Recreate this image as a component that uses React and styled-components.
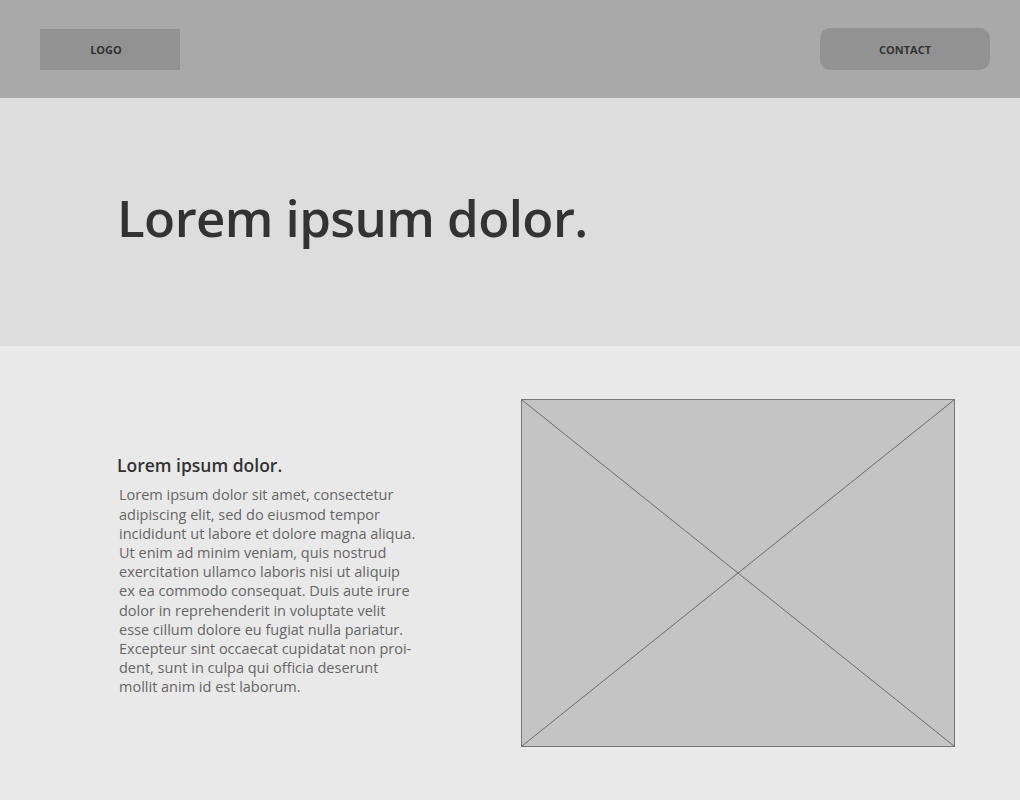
import React from "react";
import styled, { createGlobalStyle } from "styled-components";

const GlobalStyle = createGlobalStyle`
  * { box-sizing: border-box; }
  body {
    margin: 0;
    font-family: "Open Sans", "Liberation Sans", sans-serif;
    background: #e9e9e9;
  }
`;

const paragraphLines = [
  "Lorem ipsum dolor sit amet, consectetur",
  "adipiscing elit, sed do eiusmod tempor",
  "incididunt ut labore et dolore magna aliqua.",
  "Ut enim ad minim veniam, quis nostrud",
  "exercitation ullamco laboris nisi ut aliquip",
  "ex ea commodo consequat. Duis aute irure",
  "dolor in reprehenderit in voluptate velit",
  "esse cillum dolore eu fugiat nulla pariatur.",
  "Excepteur sint occaecat cupidatat non proi-",
  "dent, sunt in culpa qui officia deserunt",
  "mollit anim id est laborum.",
];

const App = () => {
  return (
    <>
      <GlobalStyle />
      <Header>
        <Logo>LOGO</Logo>
        <ContactButton type="button">CONTACT</ContactButton>
      </Header>

      <Hero>
        <HeroTitle>Lorem ipsum dolor.</HeroTitle>
      </Hero>

      <Content>
        <TextBlock>
          <SubTitle>Lorem ipsum dolor.</SubTitle>
          <Paragraph>
            {paragraphLines.map((line, index) => (
              <span key={index}>{line}</span>
            ))}
          </Paragraph>
        </TextBlock>

        {/* image placeholder */}
        <Placeholder>
          <svg viewBox="0 0 100 100" preserveAspectRatio="none">
            <line x1="0" y1="0" x2="100" y2="100" vectorEffect="non-scaling-stroke" />
            <line x1="100" y1="0" x2="0" y2="100" vectorEffect="non-scaling-stroke" />
          </svg>
        </Placeholder>
      </Content>
    </>
  );
};

const Header = styled.header`
  height: 98px;
  padding: 0 30px 0 40px;
  background: #a9a9a9;
  display: flex;
  align-items: center;
  justify-content: space-between;
`;

const Logo = styled.div`
  width: 140px;
  height: 41px;
  padding-right: 8px;
  background: #929292;
  color: #333;
  font-size: 11px;
  font-weight: 700;
  display: flex;
  align-items: center;
  justify-content: center;
`;

const ContactButton = styled.button`
  width: 170px;
  height: 42px;
  border: none;
  border-radius: 10px;
  background: #929292;
  color: #333;
  font-family: inherit;
  font-size: 11px;
  font-weight: 700;
  cursor: pointer;
`;

const Hero = styled.section`
  height: 248px;
  padding: 0 117px;
  background: #dddddd;
  display: flex;
  align-items: center;
`;

const HeroTitle = styled.h1`
  margin: 0 0 10px;
  font-size: 51px;
  font-weight: 600;
  color: #333;
  letter-spacing: -0.6px;
`;

const Content = styled.section`
  padding: 53px 65px 53px 117px;
  background: #e9e9e9;
  display: grid;
  grid-template-columns: 304px 434px;
  column-gap: 100px;
  align-items: center;
`;

const TextBlock = styled.div`
  padding-top: 4px;
`;

const SubTitle = styled.h3`
  margin: 0 0 8px;
  font-size: 17.5px;
  font-weight: 600;
  color: #333;
`;

const Paragraph = styled.p`
  margin: 0;
  padding-left: 2px;
  font-size: 14.5px;
  line-height: 19.2px;
  color: #666;
  span {
    display: block;
    white-space: nowrap;
  }
`;

const Placeholder = styled.div`
  height: 348px;
  background: #c4c4c4;
  border: 1px solid #777;
  svg {
    display: block;
    width: 100%;
    height: 100%;
  }
  line {
    stroke: #555;
    stroke-width: 0.8;
  }
`;

export default App;
